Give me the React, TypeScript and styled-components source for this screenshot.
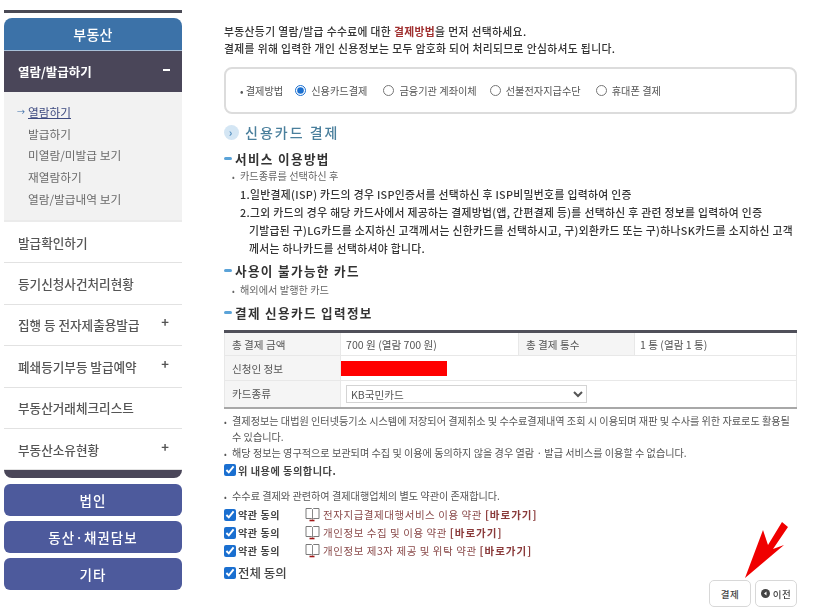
import React from "react";
import styled, { createGlobalStyle } from "styled-components";

const Global = createGlobalStyle`
  html, body { margin: 0; padding: 0; background: #fff; }
  body { font-family: "Noto Sans CJK KR", "Noto Sans", sans-serif; color: #333; }
`;
const Page = styled.div`
  position: relative;
  width: 817px;
  height: 609px;
  overflow: hidden;
  display: grid;
  grid-template-columns: 178px 573px;
  column-gap: 42px;
  padding: 10px 0 0 4px;
  box-sizing: border-box;
  filter: blur(0.4px);
`;
const Sidebar = styled.aside`
  display: flex;
  flex-direction: column;
  border-top: 3px solid #4a4a55;
  padding-top: 5px;
`;
const SideHead = styled.div`
  height: 32px;
  background: #3c72a8;
  border-radius: 8px 8px 0 0;
  color: #fff;
  font-size: 14px;
  font-weight: 500;
  letter-spacing: 0.3px;
  display: flex;
  align-items: center;
  justify-content: center;
  border-bottom: 1px solid #a8c0d8;
`;
const OpenItem = styled.div`
  height: 41px;
  background: #4a4659;
  color: #fff;
  font-size: 12.5px;
  font-weight: 700;
  padding: 0 7px 0 14px;
  display: flex;
  align-items: center;
  justify-content: space-between;
`;
const Minus = styled.span`
  width: 7px;
  height: 2px;
  margin-right: 5px;
  margin-bottom: 4px;
  background: #fff;
`;
const SubPanel = styled.ul`
  list-style: none;
  margin: 0;
  height: 130px;
  box-sizing: border-box;
  padding: 9px 0 0 24px;
  background: #f2f2f2;
  border-bottom: 2px solid #ebebeb;
`;
const SubItem = styled.li<{ $active?: boolean }>`
  position: relative;
  height: 21.7px;
  line-height: 21.7px;
  font-size: 11.7px;
  color: ${(p) => (p.$active ? "#3d4a80" : "#6a6a6a")};
  text-decoration: ${(p) => (p.$active ? "underline" : "none")};
`;
const SubArrow = styled.span`
  position: absolute;
  left: -11px;
  top: 0;
  font-size: 8px;
  color: #3d6ea8;
`;
const MenuRow = styled.div`
  height: 41.4px;
  box-sizing: border-box;
  border-bottom: 1px solid #e2e2e2;
  display: flex;
  align-items: center;
  justify-content: space-between;
  padding: 0 13px 0 14px;
  font-size: 12.6px;
  font-weight: 500;
  color: #555;
  white-space: nowrap;
  &:last-of-type { border-bottom: 0; }
`;
const Plus = styled.span`
  font-size: 13px;
  font-weight: 700;
  color: #555;
  margin-top: -6px;
`;
const SideCap = styled.div`
  height: 8px;
  background: #4a4659;
  border-radius: 0 0 10px 10px;
`;
const SideButton = styled.div`
  height: 32px;
  margin-top: 5px;
  background: #4d5a9c;
  border-radius: 6px;
  color: #fff;
  font-size: 13.5px;
  font-weight: 500;
  display: flex;
  align-items: center;
  justify-content: center;
  letter-spacing: 1px;
  & + & { margin-top: 5px; }
`;
const CapSpace = styled.div`
  height: 1px;
`;
const Main = styled.main`
  display: flex;
  flex-direction: column;
  padding-top: 13px;
`;
const Intro = styled.p`
  margin: 0;
  font-size: 10.8px;
  font-weight: 500;
  letter-spacing: 0.35px;
  line-height: 17px;
  color: #333;
  white-space: nowrap;
`;
const Accent = styled.span`
  color: #a03030;
  font-weight: 700;
`;
const MethodBox = styled.div`
  margin-top: 10px;
  height: 47px;
  box-sizing: border-box;
  border: 2px solid #dcdcdc;
  border-radius: 8px;
  display: flex;
  align-items: center;
  padding: 0 0 0 14px;
  font-size: 10.2px;
  color: #555;
`;
const MethodLabel = styled.span`
  margin-right: 12px;
`;
const RadioWrap = styled.label<{ $gap: number }>`
  display: flex;
  align-items: center;
  gap: 5px;
  margin-right: ${(p) => p.$gap}px;
  white-space: nowrap;
`;
const Radio = styled.input`
  width: 11px;
  height: 11px;
  margin: 0;
  accent-color: #1a6fd0;
`;
const PageTitle = styled.h2`
  margin: 7px 0 0;
  height: 22px;
  display: flex;
  align-items: center;
  gap: 6px;
  font-size: 14px;
  font-weight: 500;
  letter-spacing: 2px;
  color: #4a7f9c;
`;
const TitleDot = styled.span`
  width: 15px;
  height: 15px;
  border-radius: 50%;
  background: #d4e6f4;
  color: #5590c0;
  font-size: 11px;
  font-weight: 700;
  display: flex;
  align-items: center;
  justify-content: center;
`;
const Section = styled.h3<{ $top: number }>`
  margin: ${(p) => p.$top}px 0 0;
  height: 18px;
  display: flex;
  align-items: center;
  gap: 3px;
  font-size: 12.6px;
  font-weight: 700;
  letter-spacing: 1.35px;
  color: #333;
`;
const Dash = styled.span`
  width: 8px;
  height: 3px;
  border-radius: 2px;
  background: #5ba3d8;
`;
const Bullet = styled.div<{ $top?: number }>`
  margin-top: ${(p) => p.$top ?? 0}px;
  padding-left: 8px;
  font-size: 10.2px;
  line-height: 17px;
  color: #666;
  white-space: nowrap;
  &::before { content: "•"; display: inline-block; width: 8px; font-size: 8px; }
`;
const Guide = styled.div<{ $indent: number }>`
  padding-left: ${(p) => p.$indent}px;
  font-size: 10.8px;
  font-weight: 500;
  letter-spacing: 0.33px;
  line-height: 18px;
  color: #333;
  white-space: nowrap;
`;
const InfoTable = styled.table`
  margin-top: 9px;
  width: 573px;
  border-collapse: collapse;
  table-layout: fixed;
  border-top: 3px solid #50505a;
  border-bottom: 2px solid #a8a8a8;
  font-size: 10.6px;
  color: #555;
`;
const Th = styled.th<{ $w?: number }>`
  ${(p) => (p.$w ? `width: ${p.$w}px;` : "")}
  background: #f5f5f5;
  font-weight: 400;
  text-align: left;
  padding: 0 0 0 7px;
  border: 1px solid #e8e8e8;
  box-sizing: border-box;
`;
const Td = styled.td<{ $w?: number }>`
  ${(p) => (p.$w ? `width: ${p.$w}px;` : "")}
  padding: 0 0 0 5px;
  border: 1px solid #e8e8e8;
`;
const Tr = styled.tr<{ $h: number }>`
  height: ${(p) => p.$h}px;
`;
const Redact = styled.div`
  width: 106px;
  height: 15px;
  margin-left: -5px;
  background: #ff0000;
`;
const CardSelect = styled.select`
  width: 241px;
  height: 18px;
  display: block;
  box-sizing: border-box;
  border: 1px solid #d4d4d4;
  background: #fff;
  font-family: inherit;
  font-size: 10.6px;
  color: #555;
  padding: 0;
`;
const Note = styled.div<{ $top?: number }>`
  margin-top: ${(p) => p.$top ?? 0}px;
  padding-left: 8px;
  text-indent: -8px;
  font-size: 10.15px;
  line-height: 15.5px;
  color: #555;
  white-space: nowrap;
  &::before { content: "•"; display: inline-block; width: 8px; text-indent: 0; font-size: 8px; }
`;
const CheckRow = styled.label<{ $top?: number; $h?: number }>`
  margin-top: ${(p) => p.$top ?? 0}px;
  height: ${(p) => p.$h ?? 18}px;
  display: flex;
  align-items: center;
  white-space: nowrap;
`;
const Check = styled.input`
  width: 12px;
  height: 12px;
  margin: 0 2px 0 0;
  accent-color: #1a6fd0;
  flex: none;
`;
const AgreeText = styled.span`
  font-size: 10.2px;
  font-weight: 700;
  letter-spacing: 0.5px;
  color: #444;
`;
const TermLabel = styled.span`
  width: 57px;
  margin-right: 10px;
  font-size: 10px;
  font-weight: 700;
  letter-spacing: 0.6px;
  color: #444;
`;
const TermText = styled.span`
  margin-left: 3px;
  font-size: 10.5px;
  letter-spacing: 0.55px;
  color: #8a4a4a;
`;
const TermLink = styled.b`
  color: #8a3a3a;
  font-weight: 700;
  letter-spacing: 1px;
`;
const AllAgree = styled.span`
  font-size: 12.5px;
  font-weight: 500;
  color: #444;
`;
const Actions = styled.div`
  position: absolute;
  right: 20px;
  top: 580px;
  display: flex;
  gap: 4px;
`;
const ActionButton = styled.div`
  width: 42px;
  height: 27px;
  box-sizing: border-box;
  border: 1px solid #d8d8d8;
  border-radius: 5px;
  background: #fff;
  font-size: 9.5px;
  font-weight: 500;
  letter-spacing: 0.5px;
  color: #444;
  display: flex;
  align-items: center;
  justify-content: center;
  gap: 3px;
`;
const BackIcon = styled.svg`
  flex: none;
`;
const ArrowOverlay = styled.svg`
  position: absolute;
  left: 740px;
  top: 515px;
`;
const BookIcon = styled.svg`
  flex: none;
`;

const Book = () => (
  <BookIcon width="15" height="15" viewBox="0 0 15 15">
    <path d="M1 1.5h5.5l1 1 1-1H14v10H8.5l-1 .8-1-.8H1z" fill="#fff" stroke="#7a7a7a" strokeWidth="1" />
    <path d="M7.5 2.5v9.5" stroke="#888" />
    <path d="M4.5 13.5h5" stroke="#a01818" strokeWidth="1.6" />
  </BookIcon>
);

const terms = [
  "전자지급결제대행서비스 이용 약관",
  "개인정보 수집 및 이용 약관",
  "개인정보 제3자 제공 및 위탁 약관",
];

export default function App() {
  return (
    <Page>
      <Global />
      <Sidebar>
        <SideHead>부동산</SideHead>
        <OpenItem>
          열람/발급하기
          <Minus />
        </OpenItem>
        <SubPanel>
          <SubItem $active>
            <SubArrow>→</SubArrow>열람하기
          </SubItem>
          <SubItem>발급하기</SubItem>
          <SubItem>미열람/미발급 보기</SubItem>
          <SubItem>재열람하기</SubItem>
          <SubItem>열람/발급내역 보기</SubItem>
        </SubPanel>
        <MenuRow>발급확인하기</MenuRow>
        <MenuRow>등기신청사건처리현황</MenuRow>
        <MenuRow>
          집행 등 전자제출용발급<Plus>+</Plus>
        </MenuRow>
        <MenuRow>
          폐쇄등기부등 발급예약<Plus>+</Plus>
        </MenuRow>
        <MenuRow>부동산거래체크리스트</MenuRow>
        <MenuRow>
          부동산소유현황<Plus>+</Plus>
        </MenuRow>
        <SideCap />
        <CapSpace />
        <SideButton>법인</SideButton>
        <SideButton>동산·채권담보</SideButton>
        <SideButton>기타</SideButton>
      </Sidebar>
      <Main>
        <Intro>
          부동산등기 열람/발급 수수료에 대한 <Accent>결제방법</Accent>을 먼저 선택하세요.
        </Intro>
        <Intro>결제를 위해 입력한 개인 신용정보는 모두 암호화 되어 처리되므로 안심하셔도 됩니다.</Intro>
        <MethodBox>
          <MethodLabel>• 결제방법</MethodLabel>
          <RadioWrap $gap={16}>
            <Radio type="radio" name="m" defaultChecked />
            신용카드결제
          </RadioWrap>
          <RadioWrap $gap={13}>
            <Radio type="radio" name="m" />
            금융기관 계좌이체
          </RadioWrap>
          <RadioWrap $gap={15}>
            <Radio type="radio" name="m" />
            선불전자지급수단
          </RadioWrap>
          <RadioWrap $gap={0}>
            <Radio type="radio" name="m" />
            휴대폰 결제
          </RadioWrap>
        </MethodBox>
        <PageTitle>
          <TitleDot>›</TitleDot>신용카드 결제
        </PageTitle>
        <Section $top={6}>
          <Dash />
          서비스 이용방법
        </Section>
        <Bullet>카드종류를 선택하신 후</Bullet>
        <Guide $indent={16}>1.일반결제(ISP) 카드의 경우 ISP인증서를 선택하신 후 ISP비밀번호를 입력하여 인증</Guide>
        <Guide $indent={16}>2.그외 카드의 경우 해당 카드사에서 제공하는 결제방법(앱, 간편결제 등)를 선택하신 후 관련 정보를 입력하여 인증</Guide>
        <Guide $indent={25}>기발급된 구)LG카드를 소지하신 고객께서는 신한카드를 선택하시고, 구)외환카드 또는 구)하나SK카드를 소지하신 고객</Guide>
        <Guide $indent={25}>께서는 하나카드를 선택하셔야 합니다.</Guide>
        <Section $top={4}>
          <Dash />
          사용이 불가능한 카드
        </Section>
        <Bullet $top={2}>해외에서 발행한 카드</Bullet>
        <Section $top={4}>
          <Dash />
          결제 신용카드 입력정보
        </Section>
        <InfoTable>
          <tbody>
            <Tr $h={24}>
              <Th $w={116}>총 결제 금액</Th>
              <Td $w={172}>700 원 (열람 700 원)</Td>
              <Th $w={116}>총 결제 통수</Th>
              <Td>1 통 (열람 1 통)</Td>
            </Tr>
            <Tr $h={25}>
              <Th>신청인 정보</Th>
              <Td colSpan={3}>
                <Redact />
              </Td>
            </Tr>
            <Tr $h={27}>
              <Th>카드종류</Th>
              <Td colSpan={3}>
                <CardSelect defaultValue="KB국민카드">
                  <option>KB국민카드</option>
                </CardSelect>
              </Td>
            </Tr>
          </tbody>
        </InfoTable>
        <Note $top={4}>
          결제정보는 대법원 인터넷등기소 시스템에 저장되어 결제취소 및 수수료결제내역 조회 시 이용되며 재판 및 수사를 위한 자료로도 활용될
          <br />수 있습니다.
        </Note>
        <Note>해당 정보는 영구적으로 보관되며 수집 및 이용에 동의하지 않을 경우 열람 · 발급 서비스를 이용할 수 없습니다.</Note>
        <CheckRow>
          <Check type="checkbox" defaultChecked />
          <AgreeText>위 내용에 동의합니다.</AgreeText>
        </CheckRow>
        <Note $top={9}>수수료 결제와 관련하여 결제대행업체의 별도 약관이 존재합니다.</Note>
        {terms.map((term, i) => (
          <CheckRow key={term} $top={i === 0 ? 1 : 0}>
            <Check type="checkbox" defaultChecked />
            <TermLabel>약관 동의</TermLabel>
            <Book />
            <TermText>
              {term} <TermLink>[바로가기]</TermLink>
            </TermText>
          </CheckRow>
        ))}
        <CheckRow $top={2} $h={22}>
          <Check type="checkbox" defaultChecked />
          <AllAgree>전체 동의</AllAgree>
        </CheckRow>
      </Main>
      <Actions>
        <ActionButton>결제</ActionButton>
        <ActionButton>
          <BackIcon width="9" height="9" viewBox="0 0 9 9">
            <circle cx="4.5" cy="4.5" r="4.5" fill="#444" />
            <path d="M5.5 2.4 3 4.5l2.5 2.1z" fill="#fff" />
          </BackIcon>
          이전
        </ActionButton>
      </Actions>
      <ArrowOverlay width="55" height="68" viewBox="0 0 55 68">
        <polygon points="5,63 23,15 28,30 42,7 48,12 33,34 44,30" fill="#f00000" />
      </ArrowOverlay>
    </Page>
  );
}
